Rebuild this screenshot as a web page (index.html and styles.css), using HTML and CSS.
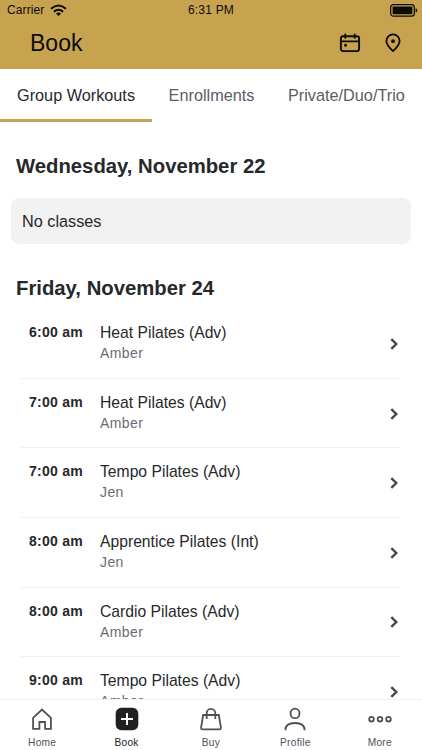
FILE: index.html
```html
<!DOCTYPE html>
<html lang="en">
<head>
<meta charset="utf-8">
<title>Book</title>
<link rel="stylesheet" href="styles.css">
</head>
<body>
<div class="app">
  <header class="header">
    <div class="status">
      <div class="carrier">Carrier
        <svg width="17" height="13" viewBox="0 0 17 13" fill="none" stroke="#0b0b08" stroke-width="1.9"><path d="M1 4.8Q8.5-1.8 16 4.8M3.9 7.8Q8.5 3.8 13.1 7.8"/><path d="M8.5 11.9L5.9 9.6Q8.5 7.6 11.1 9.6Z" fill="#0b0b08" stroke="none"/></svg>
      </div>
      <div class="clock">6:31 PM</div>
      <svg class="battery" width="28" height="13" viewBox="0 0 28 13"><rect x=".7" y=".7" width="23.6" height="11.4" rx="2.6" fill="none" stroke="#0b0b08" stroke-width="1.2"/><rect x="2.6" y="2.6" width="19.8" height="7.6" rx=".7" fill="#0b0b08"/><path d="M25.6 4.2Q27.3 4.7 27.3 6.4T25.6 8.6Z" fill="#0b0b08"/></svg>
    </div>
    <div class="title-bar">
      <h1 class="title">Book</h1>
      <svg class="calendar" width="22" height="20" viewBox="0 0 22 20" fill="none" stroke="#0b0b08" stroke-width="1.9" stroke-linecap="round"><rect x="1.9" y="3.2" width="18.2" height="14.9" rx="2.3"/><path d="M2 8.4H20M6.3 1.4V4.8M15.7 1.4V4.8"/><circle cx="6.5" cy="12.3" r="1.5" fill="#0b0b08" stroke="none"/></svg>
      <svg class="pin" width="16" height="20" viewBox="0 0 16 20" fill="none" stroke="#0b0b08" stroke-width="1.8" stroke-linejoin="round"><path d="M8 18C6 16.2 1.4 12.2 1.4 8A6.6 6.6 0 0 1 14.6 8C14.6 12.2 10 16.2 8 18Z"/><circle cx="8" cy="8.2" r="1.9" fill="#0b0b08" stroke="none"/></svg>
    </div>
  </header>
  <nav class="tabs">
    <span class="tab tab-active">Group Workouts</span>
    <span class="tab">Enrollments</span>
    <span class="tab">Private/Duo/Trio</span>
  </nav>
  <main class="content">
    <h2 class="day">Wednesday, November 22</h2>
    <div class="empty">No classes</div>
    <h2 class="day day-next">Friday, November 24</h2>
    <div class="list">
      <div class="row"><time class="time">6:00 am</time><div class="info"><div class="name">Heat Pilates (Adv)</div><div class="coach">Amber</div></div><svg class="chevron" viewBox="0 0 8 12"><path d="M1.3 1.2L6.3 6L1.3 10.8"/></svg></div>
      <div class="row"><time class="time">7:00 am</time><div class="info"><div class="name">Heat Pilates (Adv)</div><div class="coach">Amber</div></div><svg class="chevron" viewBox="0 0 8 12"><path d="M1.3 1.2L6.3 6L1.3 10.8"/></svg></div>
      <div class="row"><time class="time">7:00 am</time><div class="info"><div class="name">Tempo Pilates (Adv)</div><div class="coach">Jen</div></div><svg class="chevron" viewBox="0 0 8 12"><path d="M1.3 1.2L6.3 6L1.3 10.8"/></svg></div>
      <div class="row"><time class="time">8:00 am</time><div class="info"><div class="name">Apprentice Pilates (Int)</div><div class="coach">Jen</div></div><svg class="chevron" viewBox="0 0 8 12"><path d="M1.3 1.2L6.3 6L1.3 10.8"/></svg></div>
      <div class="row"><time class="time">8:00 am</time><div class="info"><div class="name">Cardio Pilates (Adv)</div><div class="coach">Amber</div></div><svg class="chevron" viewBox="0 0 8 12"><path d="M1.3 1.2L6.3 6L1.3 10.8"/></svg></div>
      <div class="row"><time class="time">9:00 am</time><div class="info"><div class="name">Tempo Pilates (Adv)</div><div class="coach">Amber</div></div><svg class="chevron" viewBox="0 0 8 12"><path d="M1.3 1.2L6.3 6L1.3 10.8"/></svg></div>
    </div>
  </main>
  <footer class="bottom-nav">
    <div class="nav-item"><svg class="nav-icon" viewBox="0 0 24 24"><path d="M3.1 10.9L12 2.6L20.9 10.9V21.9H15.1V15H9.4V21.9H3.1Z"/></svg><span>Home</span></div>
    <div class="nav-item nav-active"><svg class="nav-icon" viewBox="0 0 24 24"><rect x=".7" y=".8" width="22.6" height="22.4" rx="5.6" fill="#1e2023" stroke="none"/><path d="M12 6V18M6 12H18" stroke="#fff" stroke-width="1.9"/></svg><span>Book</span></div>
    <div class="nav-item"><svg class="nav-icon" viewBox="0 0 24 24"><path d="M4.2 8H19.8L21.9 20.4Q22.2 22.3 20.3 22.3H3.7Q1.8 22.3 2.1 20.4ZM7.7 12V6.2A4.3 4.3 0 0 1 16.3 6.2V12"/></svg><span>Buy</span></div>
    <div class="nav-item"><svg class="nav-icon" viewBox="0 0 24 24"><ellipse cx="12" cy="6.4" rx="4.5" ry="4.8"/><path d="M2.4 23.2C2.4 18.4 6.1 16 12 16S21.6 18.4 21.6 23.2"/></svg><span>Profile</span></div>
    <div class="nav-item"><svg class="nav-icon" viewBox="0 0 24 24"><circle cx="3.5" cy="12.2" r="2.3"/><circle cx="12" cy="12.2" r="2.3"/><circle cx="20.5" cy="12.2" r="2.3"/></svg><span>More</span></div>
  </footer>
</div>
</body>
</html>
```
FILE: styles.css
```css
* { box-sizing: border-box; }
body { margin: 0; background: #fff; font-family: "Liberation Sans", Arial, sans-serif; color: #27282a; }
svg { display: block; flex: none; }
.app { height: 750px; display: flex; flex-direction: column; overflow: hidden; }
.header { flex: none; height: 69px; background: #c8a34f; color: #0b0b08; }
.status { height: 20px; display: grid; grid-template-columns: 1fr auto 1fr; align-items: center; padding: 0 4px 0 7px; }
.carrier { display: flex; align-items: center; gap: 6px; font-size: 12px; letter-spacing: .1px; }
.clock { margin-left: -3px; margin-top: -1px; font-size: 12px; letter-spacing: .2px; }
.battery { justify-self: end; }
.title-bar { height: 46px; display: flex; align-items: center; padding: 0 21px 0 30px; }
.title { margin: 0; flex: 1; font-size: 23px; font-weight: 400; line-height: 28px; }
.calendar { margin-right: 24px; }
.tabs { flex: none; height: 53px; display: flex; }
.tab { padding: 0 16.8px; line-height: 53px; font-size: 16.25px; color: #5c5d64; white-space: nowrap; }
.tab-active { padding-left: 17px; color: #27282a; border-bottom: 3px solid #c8a34f; }
.content { flex: 1; min-height: 0; overflow: hidden; }
.day { margin: 31px 0 0 16px; font-size: 20.3px; line-height: 26px; font-weight: 700; }
.day-next { margin-top: 31px; }
.empty { margin: 19px 11px 0; height: 46px; padding-left: 11px; line-height: 46px; border-radius: 8px; background: #f2f2f2; font-size: 16.25px; }
.list { margin: 8.4px 21px 0; }
.row { height: 69.55px; display: flex; border-bottom: 1px solid #f0f0f0; padding: 13px 3px 0 8px; }
.time { width: 71px; font-size: 14px; line-height: 20px; font-weight: 700; letter-spacing: .25px; }
.info { flex: 1; }
.name { font-size: 15.7px; line-height: 21px; }
.coach { font-size: 14px; line-height: 21.4px; letter-spacing: .4px; color: #6a6b72; }
.chevron { width: 8px; height: 12px; margin-top: 15.9px; fill: none; stroke: #45464a; stroke-width: 2.4; }
.bottom-nav { flex: none; height: 51px; display: grid; grid-template-columns: repeat(5, 1fr); border-top: 1px solid #f0f0f0; background: #fff; }
.nav-item { display: flex; flex-direction: column; align-items: center; padding-top: 7px; gap: 5px; font-size: 10.2px; line-height: 13px; letter-spacing: .25px; color: #505157; }
.nav-active { color: #1e2023; }
.nav-icon { width: 24px; height: 24px; fill: none; stroke: #505157; stroke-width: 1.8; }
```
